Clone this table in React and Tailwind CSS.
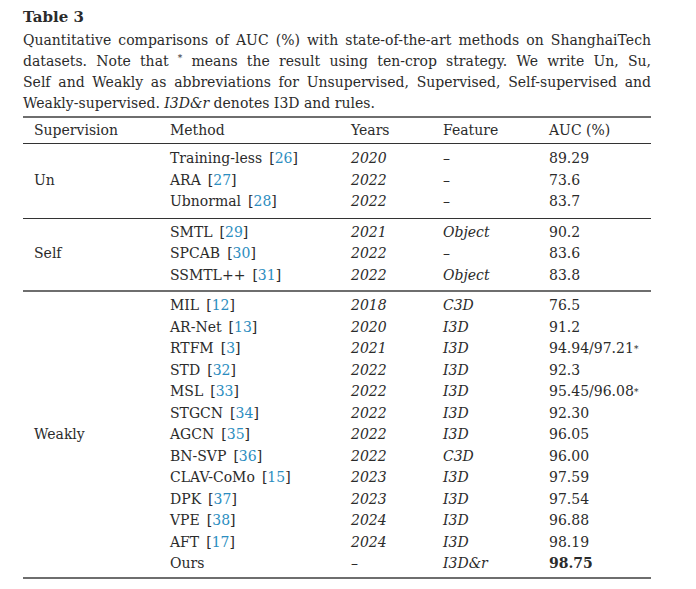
import React from 'react';

const groups = [
    {
        name: "Un",
        rows: [
            { method: "Training-less", ref: "26", year: "2020", feature: "–", auc: "89.29" },
            { method: "ARA", ref: "27", year: "2022", feature: "–", auc: "73.6" },
            { method: "Ubnormal", ref: "28", year: "2022", feature: "–", auc: "83.7" },
        ],
    },
    {
        name: "Self",
        rows: [
            { method: "SMTL", ref: "29", year: "2021", feature: "Object", auc: "90.2" },
            { method: "SPCAB", ref: "30", year: "2022", feature: "–", auc: "83.6" },
            { method: "SSMTL++", ref: "31", year: "2022", feature: "Object", auc: "83.8" },
        ],
    },
    {
        name: "Weakly",
        rows: [
            { method: "MIL", ref: "12", year: "2018", feature: "C3D", auc: "76.5" },
            { method: "AR-Net", ref: "13", year: "2020", feature: "I3D", auc: "91.2" },
            { method: "RTFM", ref: "3", year: "2021", feature: "I3D", auc: "94.94/97.21", star: true },
            { method: "STD", ref: "32", year: "2022", feature: "I3D", auc: "92.3" },
            { method: "MSL", ref: "33", year: "2022", feature: "I3D", auc: "95.45/96.08", star: true },
            { method: "STGCN", ref: "34", year: "2022", feature: "I3D", auc: "92.30" },
            { method: "AGCN", ref: "35", year: "2022", feature: "I3D", auc: "96.05" },
            { method: "BN-SVP", ref: "36", year: "2022", feature: "C3D", auc: "96.00" },
            { method: "CLAV-CoMo", ref: "15", year: "2023", feature: "I3D", auc: "97.59" },
            { method: "DPK", ref: "37", year: "2023", feature: "I3D", auc: "97.54" },
            { method: "VPE", ref: "38", year: "2024", feature: "I3D", auc: "96.88" },
            { method: "AFT", ref: "17", year: "2024", feature: "I3D", auc: "98.19" },
            { method: "Ours", year: "–", feature: "I3D&r", auc: "98.75", bold: true },
        ],
    },
];

// one line of the method list
const Row = ({ r }) => (
    <div className="grid grid-cols-[181px_92px_106px_1fr] h-[21.5px] items-center">
        <div>
            {r.method}
            {r.ref && (
                <span className="ml-[7px]">
                    [<span className="text-[#2b8dc0]">{r.ref}</span>]
                </span>
            )}
        </div>
        <div className={r.year === "–" ? "" : "italic"}>{r.year}</div>
        <div className={r.feature === "–" ? "" : "italic"}>{r.feature}</div>
        <div className={r.bold ? "font-bold" : ""}>
            {r.auc}
            {r.star && <sup className="text-[9px] relative -top-[1px]">*</sup>}
        </div>
    </div>
);

export default function App() {
    return (
        <div className="w-[696px] h-[589px] bg-white text-[#2b2b2b] text-[14px] pl-[23px] pt-[7px] [font-family:'DejaVu_Serif',serif]">
            <div className="w-[628px]">
                <div className="font-bold text-[15px] leading-[21px]">Table 3</div>
                <div className="leading-[21px] pt-[1.5px]">
                    <div className="text-justify [text-align-last:justify]">Quantitative comparisons of AUC (%) with state-of-the-art methods on ShanghaiTech</div>
                    <div className="text-justify [text-align-last:justify]">datasets. Note that <sup className="text-[9px]">*</sup> means the result using ten-crop strategy. We write Un, Su,</div>
                    <div className="text-justify [text-align-last:justify]">Self and Weakly as abbreviations for Unsupervised, Supervised, Self-supervised and</div>
                    <div>Weakly-supervised. <i>I3D&amp;r</i> denotes I3D and rules.</div>
                </div>

                <div className="mt-[2.5px] border-t-2 border-[#6e6e6e]">
                    <div className="grid grid-cols-[147px_181px_92px_106px_1fr] h-[26px] items-center border-b border-[#333]">
                        <div className="pl-[11px]">Supervision</div>
                        <div>Method</div>
                        <div>Years</div>
                        <div>Feature</div>
                        <div>AUC (%)</div>
                    </div>
                    {groups.map((g, i) => (
                        <div
                            key={g.name}
                            className={
                                i === 0
                                    ? "flex pt-[4px] pb-[5px] border-b border-[#333]"
                                    : i === 1
                                    ? "flex pt-[3px] pb-[4px] border-b-2 border-[#6e6e6e]"
                                    : "flex pt-[3px] pb-[2.5px] border-b-2 border-[#6e6e6e]"
                            }
                        >
                            <div className="w-[147px] pl-[11px] flex items-center">{g.name}</div>
                            <div className="flex-1">
                                {g.rows.map((r) => (
                                    <Row key={r.method} r={r} />
                                ))}
                            </div>
                        </div>
                    ))}
                </div>
            </div>
        </div>
    );
}
